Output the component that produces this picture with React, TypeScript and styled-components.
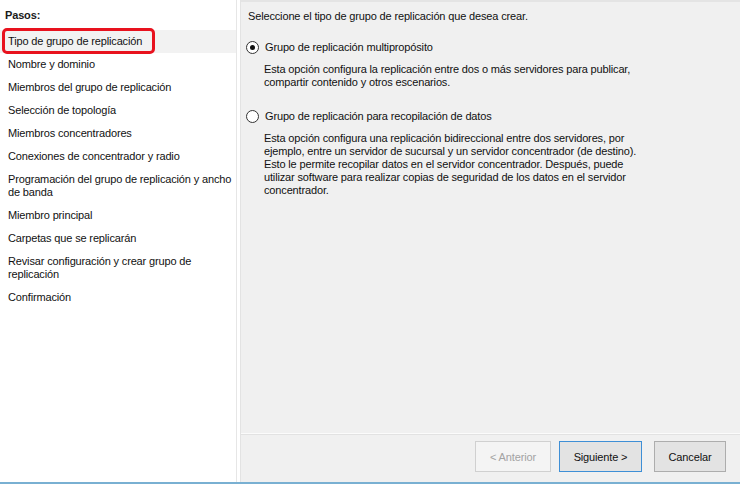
import React from "react";
import styled, { createGlobalStyle } from "styled-components";

const Global = createGlobalStyle`
  html, body { margin: 0; padding: 0; }
  body { width: 740px; height: 484px; overflow: hidden; background: #ffffff;
    font-family: "Liberation Sans", Arial, sans-serif; font-size: 11px; color: #000;
    letter-spacing: -0.15px; }
`;

const Window = styled.div`
  width: 740px;
  height: 484px;
  display: flex;
  flex-direction: column;
  box-sizing: border-box;
  border-bottom: 2px solid #79b0d2;
`;

const Body = styled.div`
  flex: 1;
  display: flex;
  min-height: 0;
`;

const Steps = styled.div`
  width: 237px;
  flex: none;
  background: #ffffff;
  border-right: 1px solid #e6e6e6;
  display: flex;
  flex-direction: column;
  padding-top: 9px;
  box-sizing: border-box;
`;

const StepsTitle = styled.div`
  font-weight: bold;
  padding: 0 0 0 5px;
  height: 21px;
  line-height: 13px;
  color: #1a1a1a;
`;

const Step = styled.div<{ $active?: boolean }>`
  position: relative;
  padding: 5px 2px 5px 8px;
  line-height: 13px;
  background: ${(p) => (p.$active ? "#f2f2f2" : "transparent")};
  color: #111;
`;

const Highlight = styled.div`
  position: absolute;
  left: 2px;
  top: -2px;
  width: 153px;
  height: 26px;
  box-sizing: border-box;
  border: 3px solid #e8121e;
  border-radius: 5px;
`;

const Gap = styled.div`
  width: 3px;
  flex: none;
  background: #ffffff;
  border-right: 1px solid #e3e3e3;
`;

const Main = styled.div`
  flex: 1;
  display: flex;
  flex-direction: column;
  background: #f0f0f0;
  border-top: 2px solid #e4e4e4;
`;

const Content = styled.div`
  flex: 1;
  padding: 7px 10px 0 5px;
  border-bottom: 1px solid #fbfbfb;
  box-shadow: 0 1px 0 #e2e2e2;
`;

const Prompt = styled.div`
  line-height: 14px;
  margin: 0 0 17px 2px;
  color: #111;
`;

const Option = styled.label`
  display: flex;
  align-items: center;
  gap: 6px;
  line-height: 14px;
  color: #111;
`;

const Radio = styled.span<{ $checked?: boolean }>`
  width: 11px;
  height: 11px;
  border-radius: 50%;
  border: 1px solid #333;
  background: #fff;
  display: inline-flex;
  align-items: center;
  justify-content: center;
  flex: none;
  &::after {
    content: "";
    width: 5px;
    height: 5px;
    border-radius: 50%;
    background: ${(p) => (p.$checked ? "#111" : "transparent")};
  }
`;

const Description = styled.p`
  margin: 9px 0 20px 18px;
  line-height: 13px;
  white-space: nowrap;
  color: #111;
`;

const ButtonBar = styled.div`
  height: 48px;
  flex: none;
  display: flex;
  align-items: flex-start;
  justify-content: flex-end;
  padding: 7px 14px 0 0;
  gap: 8px;
  box-sizing: border-box;
`;

const Button = styled.button<{ $primary?: boolean; $width: number; $gapLeft?: number }>`
  width: ${(p) => p.$width}px;
  height: 31px;
  font-family: inherit;
  font-size: 11px;
  letter-spacing: inherit;
  margin-left: ${(p) => p.$gapLeft ?? 0}px;
  color: ${(p) => (p.disabled ? "#a3a3a3" : "#111")};
  background: ${(p) => (p.disabled ? "#f4f4f4" : "#e3e3e3")};
  border: 1px solid
    ${(p) => (p.disabled ? "#d0d0d0" : p.$primary ? "#3e8fd6" : "#adadad")};
  padding: 0;
`;

const steps: string[] = [
  "Tipo de grupo de replicación",
  "Nombre y dominio",
  "Miembros del grupo de replicación",
  "Selección de topología",
  "Miembros concentradores",
  "Conexiones de concentrador y radio",
  "Programación del grupo de replicación y ancho de banda",
  "Miembro principal",
  "Carpetas que se replicarán",
  "Revisar configuración y crear grupo de replicación",
  "Confirmación",
];

export default function App() {
  return (
    <>
      <Global />
      <Window>
        <Body>
          <Steps>
            <StepsTitle>Pasos:</StepsTitle>
            {steps.map((s, i) => (
              <Step key={s} $active={i === 0}>
                {i === 0 && <Highlight />}
                {s}
              </Step>
            ))}
          </Steps>
          <Gap />
          <Main>
            <Content>
              <Prompt>Seleccione el tipo de grupo de replicación que desea crear.</Prompt>
              <Option>
                <Radio $checked />
                Grupo de replicación multipropósito
              </Option>
              <Description>
                Esta opción configura la replicación entre dos o más servidores para publicar,
                <br />
                compartir contenido y otros escenarios.
              </Description>
              <Option>
                <Radio />
                Grupo de replicación para recopilación de datos
              </Option>
              <Description>
                Esta opción configura una replicación bidireccional entre dos servidores, por
                <br />
                ejemplo, entre un servidor de sucursal y un servidor concentrador (de destino).
                <br />
                Esto le permite recopilar datos en el servidor concentrador. Después, puede
                <br />
                utilizar software para realizar copias de seguridad de los datos en el servidor
                <br />
                concentrador.
              </Description>
            </Content>
            <ButtonBar>
              <Button disabled $width={76}>&lt; Anterior</Button>
              <Button $primary $width={83}>Siguiente &gt;</Button>
              <Button $width={72} $gapLeft={4}>Cancelar</Button>
            </ButtonBar>
          </Main>
        </Body>
      </Window>
    </>
  );
}
